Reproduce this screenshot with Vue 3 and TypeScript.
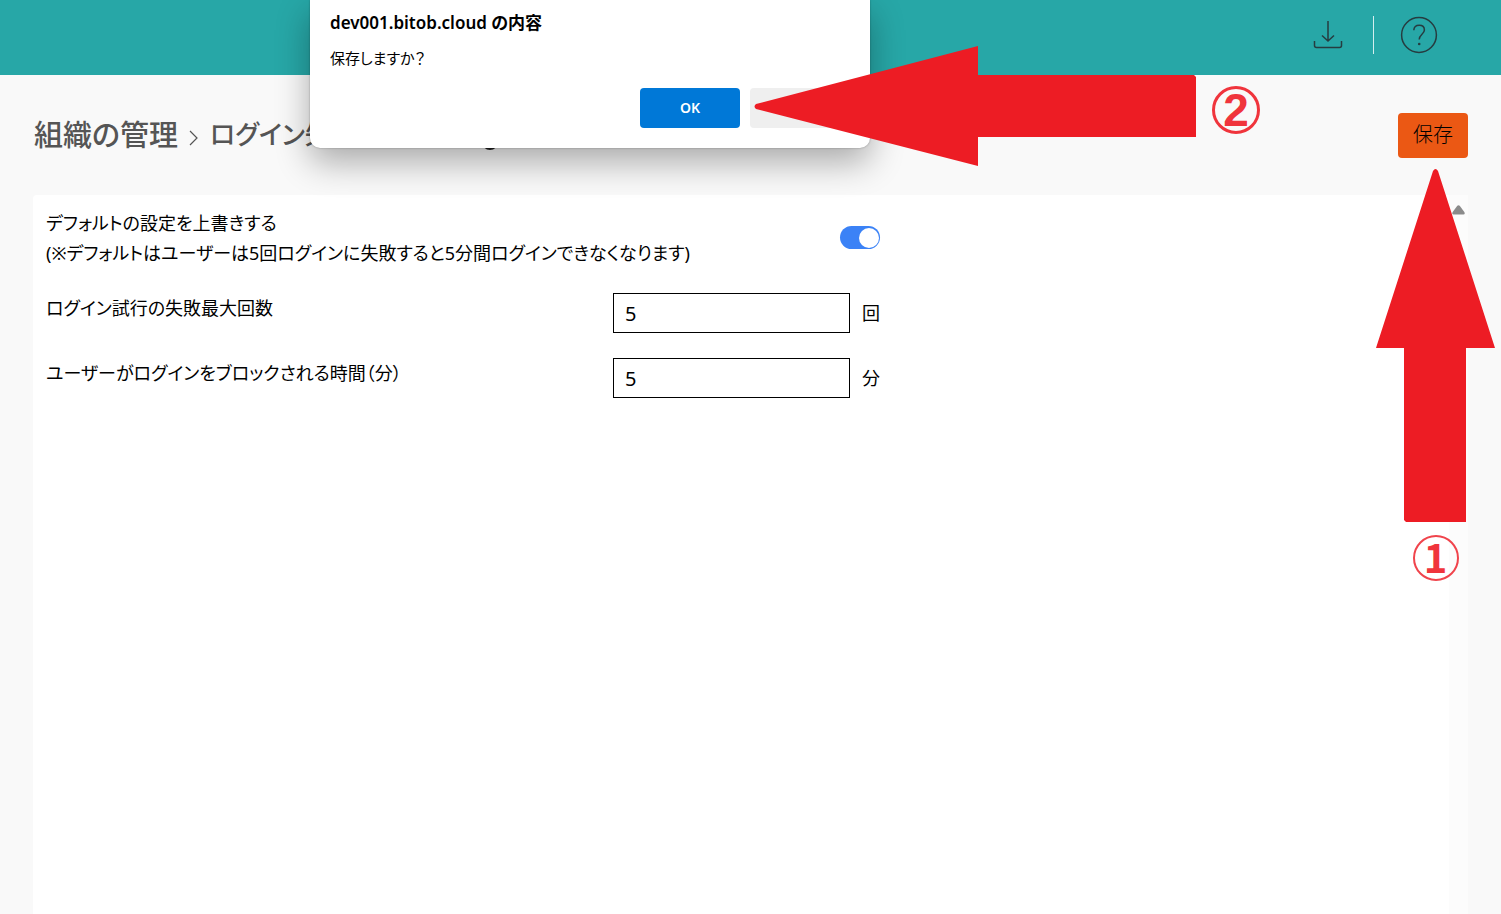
<script setup lang="ts">
import { ref } from 'vue'

interface NumberField {
  id: string
  label: string
  value: string
  unit: string
}

const override = ref(true)
const fields = ref<NumberField[]>([
  { id: 'max-failures', label: 'ログイン試行の失敗最大回数', value: '5', unit: '回' },
  { id: 'block-minutes', label: 'ユーザーがログインをブロックされる時間（分）', value: '5', unit: '分' },
])
</script>

<template>
  <div class="page">
    <header class="topbar">
      <button class="icon-button" type="button" aria-label="ダウンロード">
        <svg width="30" height="30" viewBox="0 0 30 30">
          <path d="M15 1v20M9 15.500l6 5.500 6-5.500M1.500 21v4.500q0 2 2 2h23q2 0 2-2V21" />
        </svg>
      </button>
      <span class="divider"></span>
      <button class="icon-button" type="button" aria-label="ヘルプ">
        <svg width="38" height="38" viewBox="0 0 38 38">
          <circle cx="19" cy="19" r="17.400" />
          <path d="M13.800 14.200C14 11 16.200 9.300 19.200 9.300c3.100 0 5.200 1.800 5.200 4.600 0 4.200-5.200 4.700-5.200 9.700" />
          <circle class="dot" cx="19.200" cy="28" r="1.300" />
        </svg>
      </button>
    </header>

    <div class="title-row">
      <h1 class="title">
        <span>組織の管理</span>
        <svg class="chevron" width="10" height="16" viewBox="0 0 10 16"><path d="M1 1l7 7-7 7" /></svg>
        <span class="current">ログイン失敗の動作設定</span>
        <svg class="info" width="16" height="16" viewBox="0 0 16 16"><circle cx="8" cy="8" r="7" /></svg>
      </h1>
      <button class="save" type="button">保存</button>
    </div>

    <main class="panel">
      <form class="form" @submit.prevent>
        <div class="row toggle-row">
          <label class="label" for="override">
            デフォルトの設定を上書きする<br />(※デフォルトはユーザーは5回ログインに失敗すると5分間ログインできなくなります)
          </label>
          <input id="override" v-model="override" class="switch" type="checkbox" role="switch" />
        </div>
        <div v-for="field in fields" :key="field.id" class="row">
          <label class="label" :for="field.id">{{ field.label }}</label>
          <div class="control">
            <input :id="field.id" v-model="field.value" class="number" type="text" inputmode="numeric" />
            <span>{{ field.unit }}</span>
          </div>
        </div>
      </form>
      <div class="scroll-track">
        <svg width="13" height="10" viewBox="0 0 13 10"><path d="M5.300.800q1.200-1.200 2.400 0l4.600 6.200q1.200 2.500-1 2.500H1.700q-2.200 0-1-2.500z" /></svg>
      </div>
    </main>

    <div class="dialog" role="dialog" aria-labelledby="dialog-title">
      <h2 id="dialog-title" class="dialog-title">dev001.bitob.cloud の内容</h2>
      <p class="dialog-text">保存しますか？</p>
      <div class="dialog-actions">
        <button class="dialog-button primary" type="button">OK</button>
        <button class="dialog-button" type="button" aria-label="キャンセル"></button>
      </div>
    </div>

    <div class="step step-two">
      <svg width="442" height="120" viewBox="0 0 442 120">
        <path d="M2 58L224 0V29H440L442 31V91H224V120L2 63Q-1 60.500 2 58z" />
      </svg>
      <span class="step-number bold">2</span>
    </div>
    <div class="step step-one">
      <svg width="119" height="353" viewBox="0 0 119 353">
        <path d="M57 2Q59.500-2 62 2L119 179H90V353H30L28 351V179H0z" />
      </svg>
      <span class="step-number">1</span>
    </div>
  </div>
</template>

<style>
body {
  margin: 0;
}
</style>

<style scoped>
.page {
  position: relative;
  display: flex;
  flex-direction: column;
  min-height: 100vh;
  overflow: hidden;
  background: #f9f9f9;
  color: #000;
  font-family: "Noto Sans", "Noto Sans CJK JP", sans-serif;
  font-feature-settings: "palt";
  font-size: 20px;
  line-height: 30px;
}

.page * {
  box-sizing: border-box;
}

button,
input {
  font: inherit;
  font-feature-settings: inherit;
  color: inherit;
}

button {
  padding: 0;
  border: 0;
}

.topbar {
  display: flex;
  align-items: center;
  justify-content: flex-end;
  height: 75px;
  padding: 0 63px 5px 0;
  background: #27a7a7;
}

.icon-button {
  display: flex;
  background: none;
}

.icon-button svg {
  fill: none;
  stroke: #263c40;
  stroke-width: 1.5;
}

.icon-button .dot {
  fill: #263c40;
  stroke: none;
}

.divider {
  width: 1px;
  height: 38px;
  margin: 0 26px 0 30px;
  background: #d4eeee;
}

.title-row {
  display: flex;
  align-items: center;
  justify-content: space-between;
  height: 120px;
  padding: 0 33px 0 34px;
}

.title {
  display: flex;
  align-items: center;
  gap: 11px;
  margin: 0;
  padding-bottom: 4px;
  color: #555;
  font-family: "Noto Sans CJK JP", sans-serif;
  font-size: 29px;
  font-weight: 500;
  line-height: 40px;
  white-space: nowrap;
}

.current {
  font-size: 26px;
}

.chevron {
  margin-top: 9px;
  fill: none;
  stroke: #555;
  stroke-width: 1.2;
}

.info {
  margin-top: 18px;
  margin-left: -15px;
  fill: none;
  stroke: #222;
  stroke-width: 2;
}

.save {
  width: 70px;
  height: 45px;
  border-radius: 4px;
  background: #eb5814;
  font-weight: 300;
}

.panel {
  display: flex;
  flex: 1;
  justify-content: space-between;
  margin: 0 33px;
  border-radius: 4px 0 0;
  background: #fff;
}

.form {
  display: flex;
  flex: 0 1 847px;
  flex-direction: column;
  gap: 25px;
  padding: 13px 0 0 13px;
  font-size: 18px;
}

.row {
  display: flex;
  justify-content: space-between;
}

.toggle-row {
  align-items: flex-start;
}

.label {
  white-space: nowrap;
}

.control {
  display: flex;
  align-items: center;
  gap: 12px;
}

.number {
  width: 237px;
  height: 40px;
  padding: 0 11px;
  border: 1px solid #000;
  border-radius: 0;
  background: #fff;
  font-size: 20px;
}

.switch {
  display: flex;
  align-items: center;
  justify-content: flex-end;
  width: 40px;
  height: 23px;
  margin: 18px 0 0;
  padding: 1px;
  border-radius: 12px;
  background: #3b82f6;
  appearance: none;
}

.switch::before {
  width: 20px;
  height: 20px;
  border-radius: 50%;
  background: #fff;
  content: "";
}

.switch:not(:checked) {
  justify-content: flex-start;
  background: #bbb;
}

.scroll-track {
  display: flex;
  justify-content: center;
  width: 19px;
  padding-top: 10px;
  background: #fcfcfc;
}

.scroll-track svg {
  fill: #8b8b8b;
}

.dialog {
  position: absolute;
  top: 0;
  left: 310px;
  width: 560px;
  padding: 8px 20px 20px;
  border-radius: 0 0 10px 10px;
  background: #fff;
  box-shadow: 0 0 2px rgba(0, 0, 0, 0.35), 0 14px 34px rgba(0, 0, 0, 0.32);
}

.dialog-title {
  margin: 0;
  font-size: 17px;
  font-weight: 600;
  line-height: 30px;
}

.dialog-text {
  margin: 5px 0 15px;
  font-size: 15px;
}

.dialog-actions {
  display: flex;
  justify-content: flex-end;
  gap: 10px;
}

.dialog-button {
  width: 100px;
  height: 40px;
  border-radius: 4px;
  background: #efefef;
}

.dialog-button.primary {
  background: #0078d7;
  color: #fff;
  font-size: 14px;
  font-weight: 600;
}

.step {
  position: absolute;
  display: flex;
  align-items: center;
}

.step svg {
  fill: #ed1c24;
}

.step-two {
  top: 46px;
  left: 754px;
  gap: 16px;
}

.step-one {
  top: 169px;
  right: 6px;
  flex-direction: column;
  gap: 13px;
}

.step-number {
  display: flex;
  align-items: center;
  justify-content: center;
  width: 46px;
  height: 46px;
  padding-bottom: 5px;
  border: 2px solid #f0444c;
  border-radius: 50%;
  color: #f0343c;
  font-family: "Noto Sans CJK JP", sans-serif;
  font-size: 40px;
  font-weight: 700;
  line-height: 40px;
}

.step-number.bold {
  width: 48px;
  height: 48px;
  margin-top: 8px;
  padding-bottom: 0;
  border-width: 3px;
  border-color: #f0343c;
  font-family: "Liberation Sans", Arial, sans-serif;
  font-size: 46px;
}
</style>
